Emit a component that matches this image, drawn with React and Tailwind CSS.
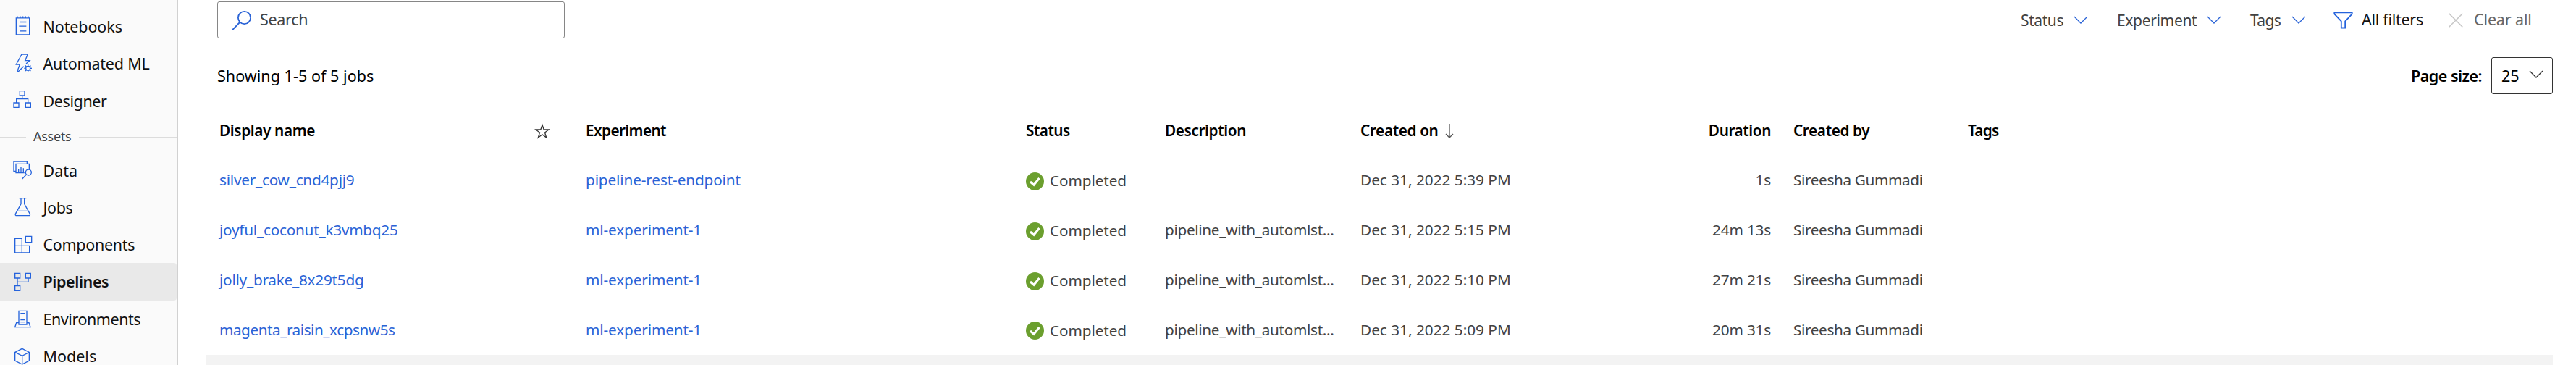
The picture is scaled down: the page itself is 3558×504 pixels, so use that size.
import React from "react";

function NavIcon({ viewBox, children }) {
  return (
    <svg viewBox={viewBox} className="h-[30px] w-[30px] shrink-0" fill="none" stroke="#2563dc" strokeWidth="4">
      {children}
    </svg>
  );
}

const gearTeeth = [0, 45, 90, 135, 180, 225, 270, 315];

const tools = [
  {
    label: "Notebooks",
    track: "tracking-[-0.1px]",
    icon: (
      <NavIcon viewBox="48 64.5 90 90">
        <path d="M67 73H122V142H67ZM72 66V73M84 66V73M95 66V73M106 66V73M117 66V73M81 90H109M79 107H109M81 127H109" />
      </NavIcon>
    ),
  },
  {
    label: "Automated ML",
    track: "tracking-[-0.2px]",
    icon: (
      <NavIcon viewBox="48 219 90 90">
        <path d="M108 264L123 251H104L115 225H90L67 267H82L71 297H75L98 275" />
        <circle cx="116" cy="283" r="9" />
        {gearTeeth.map((a) => (
          <path key={a} d="M116 274V267" transform={`rotate(${a} 116 283)`} />
        ))}
      </NavIcon>
    ),
  },
  {
    label: "Designer",
    track: "tracking-[-0.4px]",
    icon: (
      <NavIcon viewBox="48 373 90 90">
        <path d="M82 378H102V397H82ZM57 427H78V446H57ZM106 427H127V446H106ZM92 397V411M68 427V411H116V427" />
      </NavIcon>
    ),
  },
];

const assets = [
  {
    label: "Data",
    track: "tracking-normal",
    icon: (
      <NavIcon viewBox="48 660 90 90">
        <path d="M66 709H57V669H112V679M101 716H66V679H121V700M77 701V711M87 690V711M97 697V711M109 723L92 741" />
        <circle cx="118" cy="714" r="12" />
      </NavIcon>
    ),
  },
  {
    label: "Jobs",
    track: "tracking-[-0.35px]",
    icon: (
      <NavIcon viewBox="48 58 90 90">
        <path d="M79 66H109M87 66V90L64 131Q62 138 69 138H119Q126 138 124 131L101 90V66M75 119H113" />
      </NavIcon>
    ),
  },
  {
    label: "Components",
    track: "tracking-[-0.3px]",
    icon: (
      <NavIcon viewBox="48 212 90 90">
        <path d="M62 231H91V290H62ZM62 261H122V290H91M122 261V290M106 222H131V247H106Z" />
      </NavIcon>
    ),
  },
  {
    label: "Pipelines",
    selected: true,
    track: "tracking-[-0.4px]",
    icon: (
      <NavIcon viewBox="48 366 90 90">
        <path d="M62 376H83V396H62ZM106 376H127V396H106ZM62 428H83V448H62ZM72 396V428M117 396V412H72" />
      </NavIcon>
    ),
  },
  {
    label: "Environments",
    track: "tracking-[-0.45px]",
    icon: (
      <NavIcon viewBox="48 520 90 90">
        <path d="M78 533H111V589H78ZM85 543H104M85 570H104M85 579H104M78 582H68L62 600H126L120 582H111" />
      </NavIcon>
    ),
  },
  {
    label: "Models",
    track: "tracking-normal",
    icon: (
      <NavIcon viewBox="48 674 90 90">
        <path d="M92 687L121 702V737L92 752L62 737V702ZM62 702L92 717L121 702M92 717V752" />
      </NavIcon>
    ),
  },
];

function NavItem({ item }) {
  return (
    <div
      className={`flex h-[51.3px] shrink-0 items-center rounded-r-[4px] pl-4 ${
        item.selected ? "bg-[#e9e9e9] font-semibold" : ""
      }`}
    >
      {item.icon}
      <span className={`ml-[13.5px] whitespace-nowrap pt-px text-[21.5px] text-[#111] ${item.track}`}>{item.label}</span>
    </div>
  );
}

function Chevron({ className }) {
  return (
    <svg viewBox="0 0 20 12" className={`h-3 w-5 shrink-0 ${className}`} fill="none" stroke="currentColor" strokeWidth="1.3">
      <path d="M1 1L10 10L19 1" />
    </svg>
  );
}

const columns = "grid grid-cols-[436px_70px_608px_192px_270px_422px_145px_272px_1fr] items-center pl-[19px]";

const jobs = [
  ["silver_cow_cnd4pjj9", "tracking-[-0.24px]", "pipeline-rest-endpoint", "", "Dec 31, 2022 5:39 PM", "1s"],
  ["joyful_coconut_k3vmbq25", "tracking-[-0.24px]", "ml-experiment-1", "pipeline_with_automlst...", "Dec 31, 2022 5:15 PM", "24m 13s"],
  ["jolly_brake_8x29t5dg", "tracking-[-0.25px]", "ml-experiment-1", "pipeline_with_automlst...", "Dec 31, 2022 5:10 PM", "27m 21s"],
  ["magenta_raisin_xcpsnw5s", "tracking-[-0.47px]", "ml-experiment-1", "pipeline_with_automlst...", "Dec 31, 2022 5:09 PM", "20m 31s"],
];

function JobRow({ job }) {
  const [name, track, experiment, description, created, duration] = job;
  return (
    <div className={`${columns} h-[69px] border-b border-[#f1f1f1] text-[#424242] last:h-[67px] last:border-b-0`}>
      <a className={`pb-[2px] text-[#2a63d6] ${track}`}>{name}</a>
      <span />
      <a className="pb-[2px] tracking-[-0.13px] text-[#2a63d6]">{experiment}</a>
      <span className="flex items-center">
        <svg viewBox="0 0 25 25" className="h-[25px] w-[25px]">
          <circle cx="12.5" cy="12.5" r="12.5" fill="#6b9f2e" />
          <path d="M6 13L11 17.3L18.5 8" fill="none" stroke="#fff" strokeWidth="3" />
        </svg>
        <span className="ml-2 tracking-[-0.1px]">Completed</span>
      </span>
      <span className="pb-[2px] tracking-[-0.32px]">{description}</span>
      <span className="pb-[2px]">{created}</span>
      <span className="pb-[2px] text-right tracking-[-0.19px]">{duration}</span>
      <span className="pb-[2px] pl-[31px] tracking-[-0.37px]">Sireesha Gummadi</span>
      <span />
    </div>
  );
}

export default function App() {
  return (
    <div className="flex h-[504px] w-full overflow-hidden bg-white font-['Noto_Sans','Open_Sans',sans-serif]">
      <nav className="flex w-[246px] shrink-0 flex-col border-r border-[#d1d1d1] bg-[#fafafa] pr-px pt-[11px]">
        {tools.map((item) => (
          <NavItem key={item.label} item={item} />
        ))}
        <div className="flex h-[44.6px] shrink-0 items-center pt-[5px]">
          <div className="h-px w-9 bg-[#dcdcdc]" />
          <span className="ml-[10px] w-[63px] pb-[3px] text-[18px] tracking-[-0.26px] text-[#444]">Assets</span>
          <div className="h-px flex-1 bg-[#dcdcdc]" />
        </div>
        {assets.map((item) => (
          <NavItem key={item.label} item={item} />
        ))}
      </nav>

      <main className="flex min-w-0 flex-1 flex-col pl-[38px] pr-8 pt-[2px]">
        <div className="flex h-[51px] shrink-0 items-center whitespace-nowrap pl-4 text-[21.5px]">
          <div className="flex h-[51px] w-[480px] items-center rounded-[3px] border border-[#868686] pl-5">
            <svg viewBox="0 0 28 28" className="h-7 w-7" fill="none" stroke="#2a63d6" strokeWidth="1.8">
              <circle cx="16.5" cy="10.5" r="8.6" />
              <path d="M10.5 16.5L0.5 26.8" />
            </svg>
            <span className="ml-[10px] tracking-[-0.3px] text-[#424242]">Search</span>
          </div>
          <div className="ml-[2011px] flex items-center text-[21px] text-[#424242]">
            <span className="w-[73px] pt-[2px] tracking-[-0.4px]">Status</span>
            <Chevron className="text-[#2a63d6]" />
            <span className="ml-[40px] w-[124px] pt-[2px] tracking-[-0.34px]">Experiment</span>
            <Chevron className="text-[#2a63d6]" />
            <span className="ml-10 w-[57px] pt-[2px] tracking-[-0.66px]">Tags</span>
            <Chevron className="text-[#2a63d6]" />
          </div>
          <div className="ml-[38px] flex items-center text-[21.5px]">
            <svg viewBox="0 0 27 24" className="h-6 w-[27px]" fill="none" stroke="#2563dc" strokeWidth="1.8">
              <path d="M1.3 1.3H25.7V3.5L16.2 13.3V22.5H10.8V13.3L1.3 3.5Z" />
            </svg>
            <span className="ml-[12px] w-[120px] tracking-[-0.28px] text-[#111]">All filters</span>
            <svg viewBox="0 0 20 20" className="h-5 w-5" fill="none" stroke="#c6c6c6" strokeWidth="1.5">
              <path d="M0.7 0.7L19.3 19.3M19.3 0.7L0.7 19.3" />
            </svg>
            <span className="ml-[15px] tracking-[-0.13px] text-[#666]">Clear all</span>
          </div>
        </div>

        <div className="mt-[26px] flex h-[51px] shrink-0 items-center justify-between pl-4 text-[21.5px] text-black">
          <span className="pt-px tracking-[0.05px]">Showing 1-5 of 5 jobs</span>
          <div className="flex items-center">
            <span className="mr-[13px] pt-px font-semibold tracking-[-0.5px]">Page size:</span>
            <div className="flex h-[51px] w-[85px] items-center justify-between rounded-[3px] border border-[#333] pl-[13px] pr-3">
              <span className="pt-px">25</span>
              <Chevron className="-mt-[3px] text-[#333]" />
            </div>
          </div>
        </div>

        <div className="mt-4 whitespace-nowrap text-[20.75px]">
          <div className={`${columns} h-[70px] border-b border-[#e8e8e8] font-semibold text-black`}>
            <span className="tracking-[-0.37px]">Display name</span>
            <svg viewBox="0 0 22 22" className="-ml-px h-[22px] w-[22px]" fill="none" stroke="#333" strokeWidth="1.3">
              <path d="M11 2.5L13.2 9H20L14.5 13L16.7 20L11 15.8L5.3 20L7.5 13L2 9H8.8Z" />
            </svg>
            <span className="tracking-[-0.6px]">Experiment</span>
            <span className="tracking-[-0.53px]">Status</span>
            <span className="tracking-[-0.38px]">Description</span>
            <span className="flex items-center tracking-[-0.36px]">
              Created on
              <svg viewBox="0 0 12 20" className="ml-[9px] h-5 w-3" fill="none" stroke="#555" strokeWidth="1.3">
                <path d="M6 0V19M1 14L6 19L11 14" />
              </svg>
            </span>
            <span className="text-right tracking-[-0.42px]">Duration</span>
            <span className="pl-[31px] tracking-[-0.37px]">Created by</span>
            <span className="tracking-[-0.8px]">Tags</span>
          </div>
          <div>
            {jobs.map((job) => (
              <JobRow key={job[0]} job={job} />
            ))}
          </div>
        </div>
        <div className="h-[14px] shrink-0 bg-[#f3f3f3]" />
      </main>
    </div>
  );
}
